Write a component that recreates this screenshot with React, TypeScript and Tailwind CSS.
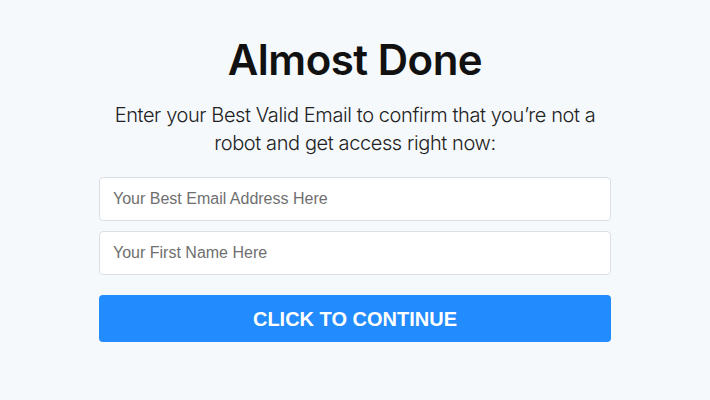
export default function App() {
  return (
    <div className="flex min-h-[400px] w-full flex-col items-center bg-[#f5f9fc] pt-[34px]">
      <h1 className="font-['Inter',sans-serif] text-[42px] font-semibold leading-[52px] tracking-[-0.5px] text-[#111111]">
        Almost Done
      </h1>
      <p className="mt-[15px] w-[512px] text-center font-['Inter',sans-serif] text-[20px] font-light leading-[28px] tracking-[-0.4px] text-[#222222]">
        Enter your Best Valid Email to confirm that you’re not a robot and get access right now:
      </p>
      <form className="mt-[20px] flex w-[512px] flex-col" onSubmit={(e) => e.preventDefault()}>
        <input
          type="email"
          placeholder="Your Best Email Address Here"
          className="h-[44px] w-full rounded-[4px] border border-[#dcdfe5] bg-white px-[13px] font-['Liberation_Sans',Arial,sans-serif] text-[16px] text-[#333] outline-none placeholder:text-[#6f6f6f]"
        />
        <input
          type="text"
          placeholder="Your First Name Here"
          className="mt-[10px] h-[44px] w-full rounded-[4px] border border-[#dcdfe5] bg-white px-[13px] font-['Liberation_Sans',Arial,sans-serif] text-[16px] text-[#333] outline-none placeholder:text-[#6f6f6f]"
        />
        <button
          type="submit"
          className="mt-[20px] h-[47px] w-full rounded-[4px] bg-[#228bfd] font-['Liberation_Sans',Arial,sans-serif] text-[20px] font-bold text-white"
        >
          CLICK TO CONTINUE
        </button>
      </form>
    </div>
  );
}
